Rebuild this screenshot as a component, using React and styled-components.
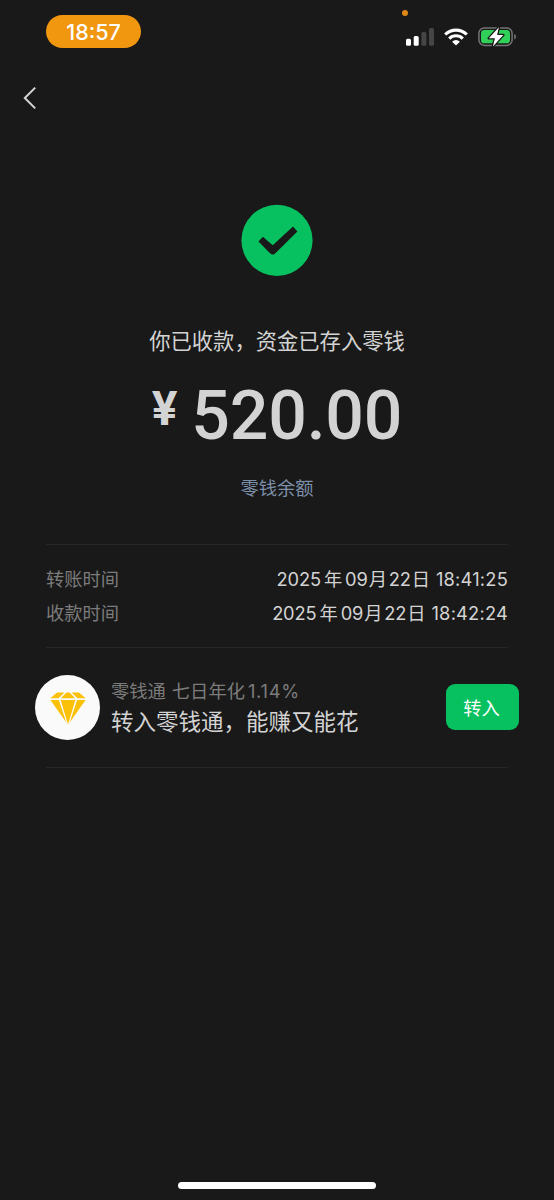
import React from 'react';
import styled, { createGlobalStyle } from 'styled-components';

const records = [
  { label: '转账时间', time: '18:41:25' },
  { label: '收款时间', time: '18:42:24' },
];

function StatusBar() {
  return (
    <StatusBarContainer>
      <Clock>18:57</Clock>
      <StatusIcons>
        <MicDot />
        <svg width="28" height="18" viewBox="0 0 28 18">
          <rect x="0" y="10.8" width="5" height="7" rx="1.5" fill="#fff" />
          <rect x="7.7" y="8" width="5" height="9.8" rx="1.5" fill="#fff" />
          <rect x="15.4" y="4" width="5" height="13.8" rx="1.5" fill="#454545" />
          <rect x="23" y="0" width="5" height="17.8" rx="1.5" fill="#454545" />
        </svg>
        <svg width="24" height="18" viewBox="0 0 24 18">
          <g fill="none" stroke="#fff" strokeWidth="3.1">
            <path d="M1.2 6.5a15.4 15.4 0 0 1 21.6 0" />
            <path d="M5.2 10.6a9.7 9.7 0 0 1 13.6 0" />
          </g>
          <path d="M12 17.6 8.1 13.7a5.6 5.6 0 0 1 7.8 0z" fill="#fff" />
        </svg>
        <svg width="39" height="22" viewBox="0 0 39 22">
          <rect x="0.9" y="2" width="33.2" height="17.4" rx="5.4" fill="none" stroke="#747474" strokeWidth="1.5" />
          <rect x="3" y="4.1" width="29" height="13.2" rx="3.4" fill="#30d158" />
          <path d="M36.2 8v5.6c1.1-.5 1.8-1.5 1.8-2.8s-.7-2.3-1.8-2.8z" fill="#747474" />
          <path
            d="M20.9 1.2 10.8 12.3h6.1l-2 8.2 10.4-11.5h-6.2z"
            fill="#fff"
            stroke="#191919"
            strokeWidth="2.6"
            strokeLinejoin="round"
            paintOrder="stroke"
          />
        </svg>
      </StatusIcons>
    </StatusBarContainer>
  );
}

function App() {
  return (
    <Screen>
      <GlobalStyle />
      <StatusBar />
      <NavBar>
        <svg width="14" height="24" viewBox="0 0 14 24">
          <path d="M12.2 1.6 1.8 12l10.4 10.4" fill="none" stroke="#d5d5d5" strokeWidth="2" />
        </svg>
      </NavBar>

      <Result>
        <svg width="72" height="72" viewBox="0 0 72 72">
          <circle cx="36" cy="36.3" r="35.6" fill="#07c160" />
          <path
            d="M17.5 37.4 21.9 32.8 31.7 41.3 52 22.4 56.4 27.5 34.4 49.3q-2.7 2.5-5.4 0z"
            fill="#191919"
          />
        </svg>
        <Message>你已收款，资金已存入零钱</Message>
        <Amount>
          <Currency>¥</Currency>
          <span>520.00</span>
        </Amount>
        <BalanceLink>零钱余额</BalanceLink>
      </Result>

      <Details>
        {records.map((item) => (
          <DetailRow key={item.label}>
            <span>{item.label}</span>
            <DateTime>
              <DatePart $gap={3}>2025</DatePart>
              <DatePart $gap={3}>年</DatePart>
              <DatePart $gap={1}>09</DatePart>
              <DatePart $gap={2}>月</DatePart>
              <DatePart $gap={1}>22</DatePart>
              <DatePart $gap={6}>日</DatePart>
              <Time>{item.time}</Time>
            </DateTime>
          </DetailRow>
        ))}
      </Details>

      <Promo>
        <PromoIcon>
          <svg width="36" height="33" viewBox="0 0 36 33">
            <g fill="#fbc108">
              <path d="M7 .5h7.5L8.4 6.2H.3z" />
              <path d="M16.5 .5h3L25.2 6.2H10.8z" />
              <path d="M21.5 .5H29l6.7 5.7h-8.1z" />
              <path d="M.4 8h8.5l7.4 22.5z" />
              <path d="M10.6 8h14.8L18 32.4z" />
              <path d="M27.1 8h8.5L19.7 30.5z" />
            </g>
          </svg>
        </PromoIcon>
        <PromoText>
          <PromoRate>
            <span>零钱通</span>
            <span>七日年化</span>
            <Rate>1.14%</Rate>
          </PromoRate>
          <PromoTitle>转入零钱通，能赚又能花</PromoTitle>
        </PromoText>
        <TransferButton>转入</TransferButton>
      </Promo>

      <HomeIndicator />
    </Screen>
  );
}

const GlobalStyle = createGlobalStyle`
  body {
    margin: 0;
    background: #191919;
  }
`;

const Screen = styled.div`
  box-sizing: border-box;
  display: flex;
  flex-direction: column;
  width: 554px;
  height: 1200px;
  background: #191919;
  color: #d3d3d3;
  font-family: Inter, 'Noto Sans CJK SC', sans-serif;
`;

const StatusBarContainer = styled.div`
  display: flex;
  justify-content: space-between;
  align-items: flex-start;
  height: 60px;
  padding: 15px 37.5px 0 46px;
  box-sizing: border-box;
`;

const Clock = styled.div`
  width: 95px;
  height: 33px;
  border-radius: 17px;
  background: #f0960f;
  color: #fff;
  font-size: 21.5px;
  font-weight: 500;
  line-height: 34px;
  text-align: center;
`;

const StatusIcons = styled.div`
  position: relative;
  display: flex;
  align-items: center;
  gap: 10px;
  padding-top: 11px;
`;

const MicDot = styled.div`
  position: absolute;
  top: -5px;
  left: -4px;
  width: 6px;
  height: 6px;
  border-radius: 50%;
  background: #dd8816;
`;

const NavBar = styled.div`
  display: flex;
  align-items: center;
  height: 76px;
  padding-left: 23px;
`;

const Result = styled.div`
  display: flex;
  flex-direction: column;
  align-items: center;
  padding-top: 68px;
`;

const Message = styled.div`
  margin-top: 50px;
  font-size: 21.3px;
  line-height: 30px;
`;

const Amount = styled.div`
  display: flex;
  align-items: flex-start;
  margin-top: 19px;
  font-family: Roboto, sans-serif;
  font-size: 68px;
  font-weight: 500;
  letter-spacing: -0.2px;
  line-height: 82px;
`;

const Currency = styled.span`
  margin-right: 14px;
  font-size: 48px;
  font-weight: 700;
  line-height: 68px;
`;

const BalanceLink = styled.div`
  margin-top: 17px;
  color: #7d90a9;
  font-size: 18.3px;
  line-height: 28px;
`;

const Details = styled.div`
  margin: 42px 46px 0;
  padding: 17px 0;
  border-top: 1px solid #272727;
  border-bottom: 1px solid #272727;
`;

const DetailRow = styled.div`
  display: flex;
  justify-content: space-between;
  height: 34px;
  color: #7c7c7c;
  font-size: 18.3px;
  line-height: 34px;
`;

const DateTime = styled.div`
  display: flex;
  color: #d3d3d3;
`;

const DatePart = styled.span`
  margin-right: ${(props) => props.$gap}px;
  letter-spacing: -0.15px;
`;

const Time = styled.span`
  letter-spacing: 0.2px;
`;

const Promo = styled.div`
  display: flex;
  align-items: center;
  height: 119px;
  margin: 0 46px;
  border-bottom: 1px solid #272727;
`;

const PromoIcon = styled.div`
  box-sizing: border-box;
  display: flex;
  align-items: center;
  justify-content: center;
  width: 65px;
  height: 65px;
  margin-left: -11px;
  padding-top: 2px;
  border-radius: 50%;
  background: #fafafa;
`;

const PromoText = styled.div`
  flex: 1;
  margin: -1px 0 0 11px;
  white-space: nowrap;
`;

const PromoRate = styled.div`
  display: flex;
  color: #7c7c7c;
  font-size: 18.3px;
  line-height: 30px;

  span + span {
    margin-left: 6px;
  }
`;

const Rate = styled.span`
  letter-spacing: 0.7px;

  && {
    margin-left: 3px;
  }
`;

const PromoTitle = styled.div`
  font-size: 22.5px;
  line-height: 32px;
`;

const TransferButton = styled.button`
  width: 73px;
  height: 46px;
  margin: -1px -11px 0 0;
  padding: 0 2px 0 0;
  border: none;
  border-radius: 9px;
  background: #07c160;
  color: #fff;
  font-family: inherit;
  font-size: 18.3px;
`;

const HomeIndicator = styled.div`
  width: 198px;
  height: 7px;
  margin: auto auto 11px;
  border-radius: 4px;
  background: #fff;
`;

export default App;
